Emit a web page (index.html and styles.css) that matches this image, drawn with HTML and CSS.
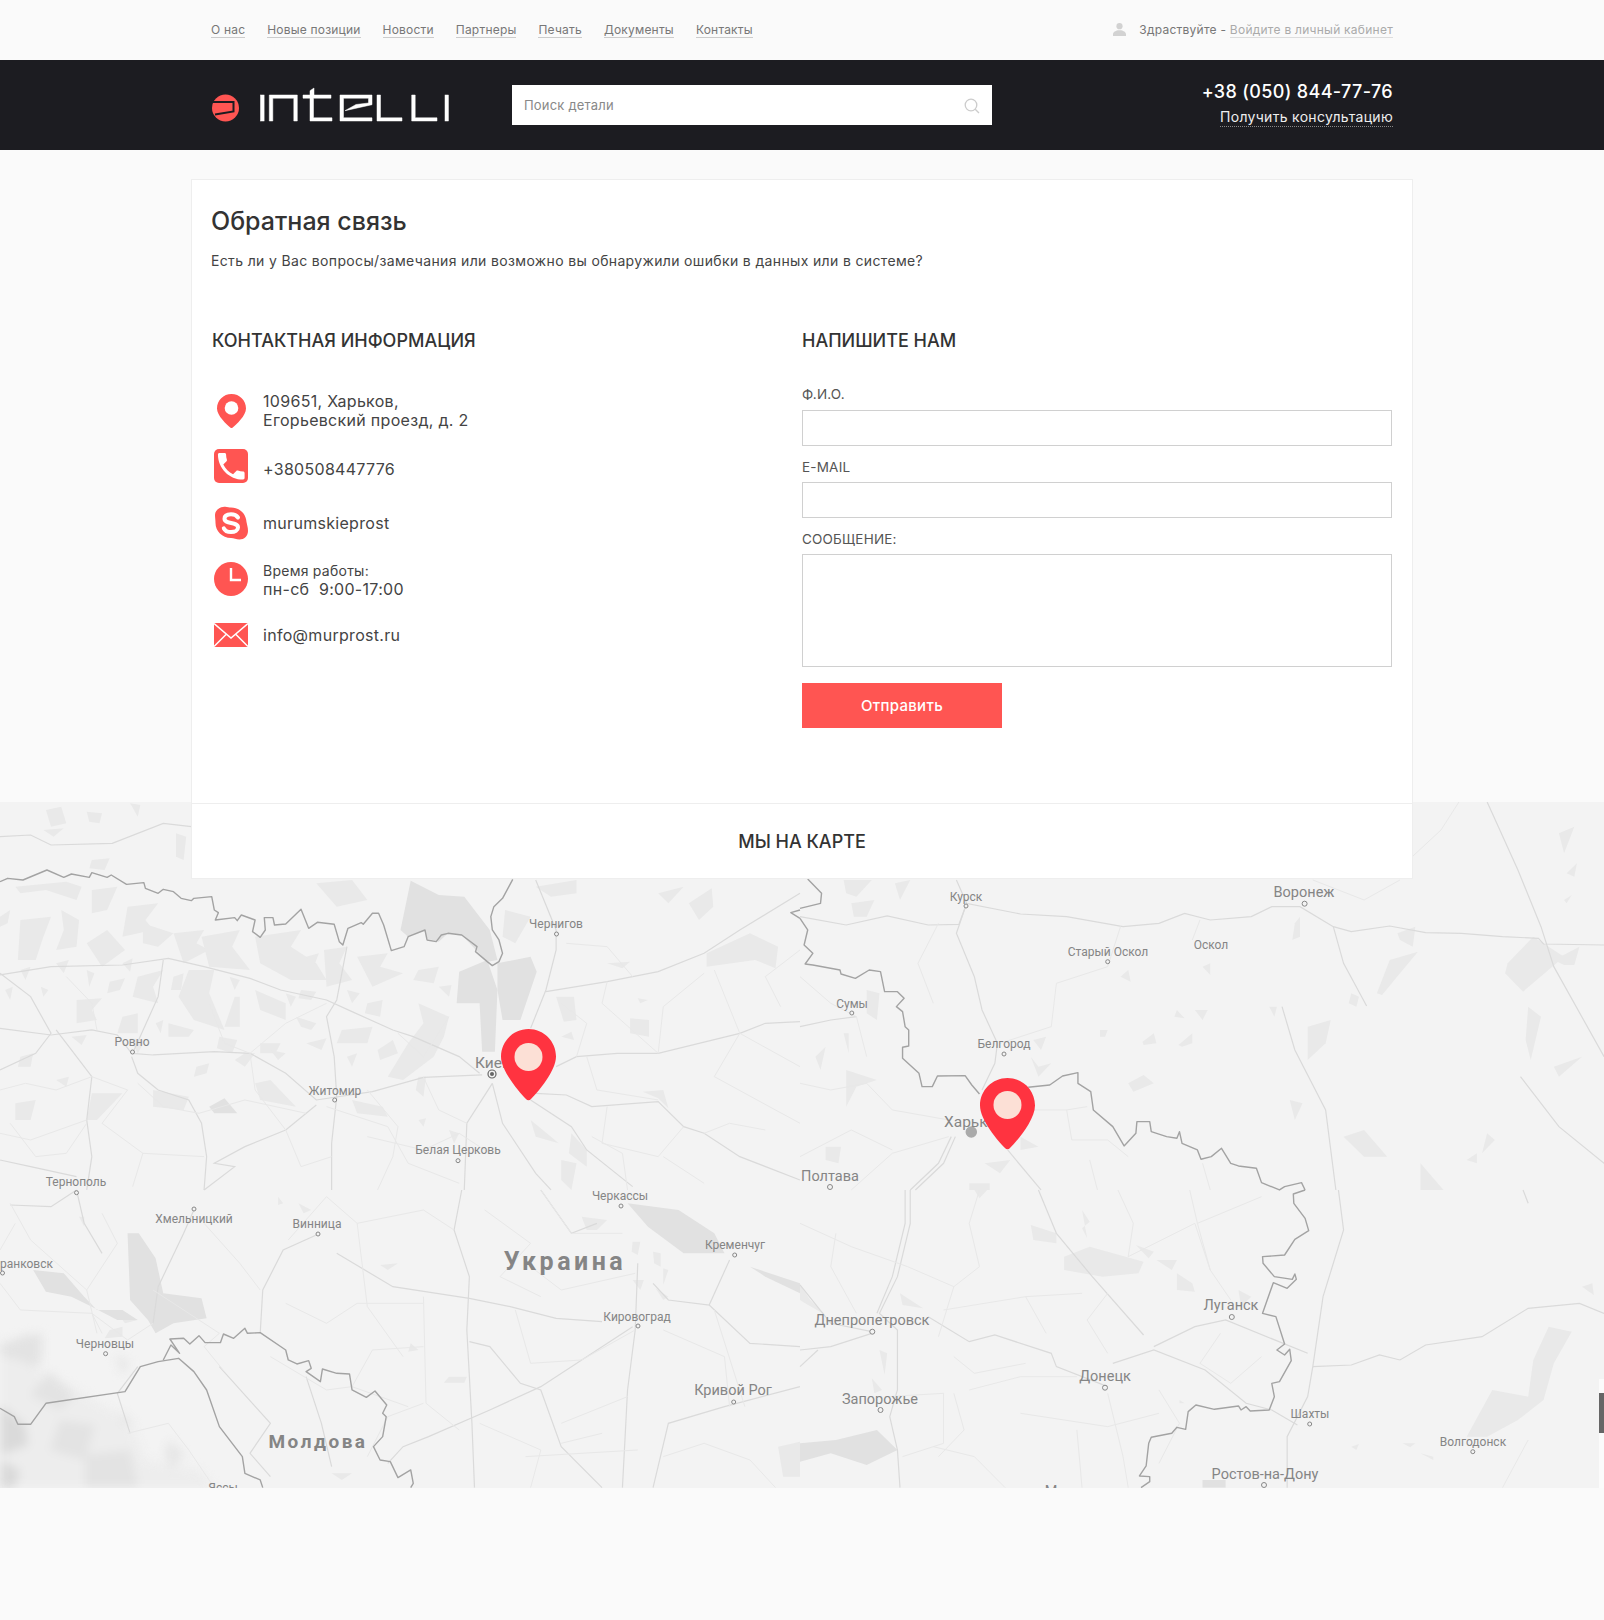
FILE: index.html
```html
<!DOCTYPE html>
<html lang="ru">
<head>
<meta charset="utf-8">
<title>Обратная связь</title>
<link rel="stylesheet" href="styles.css">
</head>
<body>
<header class="topbar">
  <div class="wrap topbar-inner">
    <nav class="topnav">
      <a href="#">О нас</a><a href="#">Новые позиции</a><a href="#">Новости</a><a href="#">Партнеры</a><a href="#">Печать</a><a href="#">Документы</a><a href="#">Контакты</a>
    </nav>
    <div class="greet">
      <svg class="user-ico" viewBox="0 0 13 13"><circle cx="6.5" cy="3.2" r="3.1"/><path d="M0 13V11.2C0 9 3 7.9 4.6 7.3H8.4C10 7.9 13 9 13 11.2V13Z"/></svg>
      <span class="greet-text">Здраствуйте - <a href="#">Войдите в личный кабинет</a></span>
    </div>
  </div>
</header>

<div class="mainbar">
  <div class="wrap mainbar-inner">
    <a class="logo" href="#" aria-label="intelli">
      <svg viewBox="0 0 240 40" width="240" height="40">
        <circle class="logo-dot" cx="14.5" cy="23" r="13.5"/>
        <path class="logo-cut" d="M0 17H22.5V26.500L4 29.500"/>
        <g class="logo-mark">
          <rect x="49.500" y="10" width="3.600" height="26"/>
          <path d="M58.300 36V10H86.300V36H82.800V13.200H61.800V36Z"/>
          <path d="M99 36V13.200H92V10H99V5.700L103 3V10H120V13.200H102.500V32.800H121V36Z"/>
          <path d="M129 36V10H161V19.700L134 25.700L145 19.500L157.500 18V13.200H132.500V32.800H161V36Z"/>
          <path d="M166 10H169.500V32.800H191V36H166Z"/>
          <path d="M200.700 10H204.200V32.800H226V36H200.700Z"/>
          <rect x="234" y="10" width="3.400" height="26"/>
        </g>
      </svg>
    </a>
    <form class="search">
      <input class="search-input" type="text" placeholder="Поиск детали">
      <svg class="search-ico" viewBox="0 0 16 16"><circle cx="7" cy="7" r="5.8"/><path d="M11.2 11.2L15 15"/></svg>
    </form>
    <div class="call">
      <div class="call-phone">+38 (050) 844-77-76</div>
      <a class="call-link" href="#">Получить консультацию</a>
    </div>
  </div>
</div>

<main class="card">
  <h1 class="title">Обратная связь</h1>
  <p class="lead">Есть ли у Вас вопросы/замечания или возможно вы обнаружили ошибки в данных или в системе?</p>
  <div class="columns">
    <section class="info">
      <h2 class="heading heading-left">КОНТАКТНАЯ ИНФОРМАЦИЯ</h2>
      <ul class="contacts">
        <li class="contact">
          <svg class="ico" viewBox="-0.500 0 34 34"><path class="red" d="M17 0C25 0 31.500 6.400 31.500 14.400C31.500 22 21 31 17 34.500C13 31 2.500 22 2.500 14.400C2.500 6.400 9 0 17 0Z"/><circle class="white" cx="17" cy="14" r="6.800"/></svg>
          <div class="contact-text">109651, Харьков,<br>Егорьевский проезд, д. 2</div>
        </li>
        <li class="contact">
          <svg class="ico ico-up" viewBox="0 0 34 34"><rect class="red" width="34" height="34" rx="5"/><path class="white" transform="translate(-0.500 -0.500) scale(1.480)" d="M6.620 10.790c1.440 2.830 3.760 5.140 6.590 6.590l2.200-2.200c.270-.270.670-.360 1.020-.240 1.120.370 2.330.570 3.570.570.550 0 1 .450 1 1V20c0 .550-.450 1-1 1-9.390 0-17-7.610-17-17 0-.550.450-1 1-1h3.500c.550 0 1 .450 1 1 0 1.250.200 2.450.570 3.570.110.350.030.740-.250 1.020l-2.200 2.200z"/></svg>
          <div class="contact-text contact-low">+380508447776</div>
        </li>
        <li class="contact">
          <svg class="ico" viewBox="0 0 34 34"><path class="red" d="M9 1C12 0 15 1.500 17 1.500C26 1.500 32 8 32.500 16C33 19 34 21 34 25C34 30 30 33.500 25.500 33.500C22 33.500 20 32 17 32C8 32 1.500 25 1.500 17C1.500 14 1 12 1 9C1 5 4.500 1.500 9 1Z"/><path class="skype-s" d="M24 11.500C22.500 9.300 20 8.300 17 8.300C13 8.300 10.500 10 10.500 12.800C10.500 18.500 24 15.500 24 21.500C24 24.300 21 26 17 26C13.500 26 11 24.800 9.800 22.300"/></svg>
          <div class="contact-text">murumskieprost</div>
        </li>
        <li class="contact">
          <svg class="ico" viewBox="0 0 34 34"><circle class="red" cx="17" cy="17" r="17"/><path class="clock-hand" d="M17 6V18H27"/></svg>
          <div class="contact-text contact-hours"><span class="hours-label">Время работы:</span><br>пн-сб&nbsp;&nbsp;9:00-17:00</div>
        </li>
        <li class="contact">
          <svg class="ico ico-mail" viewBox="0 0 34 24"><rect class="red" width="34" height="24"/><path class="mail-line" d="M0 .5L17 15L34 .5M0 23.500L12 11.500M34 23.500L22 11.500"/></svg>
          <div class="contact-text">info@murprost.ru</div>
        </li>
      </ul>
    </section>
    <section class="write">
      <h2 class="heading">НАПИШИТЕ НАМ</h2>
      <form class="form">
        <label class="field-label" for="f-name">Ф.И.О.</label>
        <input class="field" id="f-name" type="text">
        <label class="field-label" for="f-mail">E-MAIL</label>
        <input class="field" id="f-mail" type="text">
        <label class="field-label" for="f-msg">СООБЩЕНИЕ:</label>
        <textarea class="field field-area" id="f-msg"></textarea>
        <button class="submit" type="button">Отправить</button>
      </form>
    </section>
  </div>
</main>

<section class="map">
  <svg class="map-canvas" viewBox="0 802 1604 686" width="1604" height="686">
    <rect class="land" x="0" y="802" width="1604" height="686"/>

    <g class="shade-soft">
      <polygon class="sh-a" points="0,1340 40,1370 85,1395 130,1420 145,1460 200,1470 215,1488 0,1488"/>
      <polygon class="sh-b" points="0,1345 25,1335 42,1334 42,1358 36,1368 25,1362 0,1355"/>
      <polygon class="sh-b" points="50,1372 75,1395 60,1410 30,1395"/>
      <polygon class="sh-b" points="60,1420 95,1425 85,1460 50,1450"/>
      <polygon class="sh-c" points="0,1405 25,1425 28,1445 0,1455"/>
      <polygon class="sh-b" points="85,1455 130,1450 138,1488 85,1488"/>
      <polygon class="sh-c" points="0,1460 20,1470 15,1488 0,1488"/>
      <polygon class="sh-d" points="115,1355 130,1362 122,1375"/>
      <polygon class="sh-d" points="120,1410 135,1425 122,1425"/>
      <polygon class="sh-d" points="170,1440 185,1455 170,1470 165,1450"/>
    </g>

    <g transform="translate(0 790) scale(.5102 .3333)">
      <g class="forest">
        <polygon points="30,290 130,275 160,290 150,330 90,300 40,310"/>
        <polygon points="180,300 230,290 210,360 180,370"/>
        <polygon points="250,350 310,340 285,390 300,420 240,440"/>
        <polygon points="120,360 155,390 150,470 110,480 125,420"/>
        <polygon points="40,390 100,380 85,440 70,510 35,510"/>
        <polygon points="170,460 210,420 245,480 200,530"/>
        <polygon points="280,400 340,430 310,470 280,460"/>
        <polygon points="340,430 400,420 385,460 410,480 360,520"/>
        <polygon points="395,440 470,420 455,470 490,540 410,530"/>
        <polygon points="500,440 590,420 570,470 620,520 640,570 570,570 510,520"/>
        <polygon points="635,480 680,470 665,520 690,570 640,590"/>
        <polygon points="700,500 760,490 745,530 790,550 730,590"/>
        <polygon points="270,560 320,540 300,590 310,640 260,620"/>
        <polygon points="370,540 420,540 410,610 440,720 380,690 350,620"/>
        <polygon points="460,620 470,620 470,710 440,710"/>
        <polygon points="500,600 560,640 560,690 510,660"/>
        <polygon points="150,630 200,625 180,660 190,690 150,700"/>
        <polygon points="240,680 270,670 270,730 230,730"/>
        <polygon points="330,700 380,720 370,740 330,740"/>
        <polygon points="580,680 620,700 610,720 590,710"/>
        <polygon points="670,720 730,710 720,760 660,760"/>
        <polygon points="510,760 550,760 540,790 510,790"/>
        <polygon points="820,640 880,680 870,740 850,800 790,870 760,860 800,760 830,700"/>
        <polygon points="480,790 500,790 480,830 460,810"/>
        <polygon points="300,900 370,920 360,960 300,950"/>
        <polygon points="500,880 530,870 580,950 510,930"/>
        <polygon points="690,930 750,950 760,980 700,970"/>
        <polygon points="180,910 240,910 190,990 170,990"/>
        <polygon points="30,940 70,930 60,990 30,990"/>
        <polygon points="1090,620 1125,620 1130,690 1105,695"/>
        <polygon points="1235,685 1272,690 1272,740 1235,730"/>
        <polygon points="1350,340 1395,295 1398,350 1370,390"/>
        <polygon points="1290,310 1340,290 1310,340"/>
        <polygon points="1385,490 1470,430 1525,470 1520,535 1480,510 1385,530"/>
        <polygon points="1050,290 1130,270 1130,310 1080,320"/>
        <polygon points="620,280 690,270 720,330 660,350"/>
        <polygon points="990,360 1040,380 1010,460 985,440"/>
        <polygon points="820,860 835,860 830,920 815,900"/>
        <polygon points="1120,1030 1150,1080 1150,1130 1115,1090"/>
        <polygon points="1040,990 1080,1040 1095,1060 1050,1040"/>
        <polygon points="1260,905 1300,900 1310,955 1290,925"/>
        <polygon points="1100,1110 1130,1120 1120,1200 1100,1170"/>
        <polygon points="90,60 120,50 130,100 100,110"/><polygon points="170,65 200,70 195,100 175,95"/><polygon points="255,40 275,45 270,80"/><polygon points="345,130 365,140 360,210 345,200"/><polygon points="180,210 215,205 205,240 175,235"/><polygon points="85,120 125,115 105,140"/>
        <polygon points="0,380 20,360 15,400 0,410"/><polygon points="10,600 25,590 20,630"/><polygon points="80,590 95,600 85,620"/><polygon points="170,540 185,550 175,590"/><polygon points="215,575 245,565 235,600 210,610"/><polygon points="340,560 360,550 355,600 335,600"/><polygon points="450,560 470,570 460,600"/><polygon points="590,600 620,605 610,630 585,625"/><polygon points="680,600 705,610 690,640"/><polygon points="560,610 580,620 570,650"/><polygon points="430,740 465,750 455,790 425,775"/><polygon points="255,745 285,750 270,790"/><polygon points="140,740 170,735 160,765"/><polygon points="40,800 65,790 60,830 35,830"/><polygon points="110,870 135,860 130,890"/><polygon points="600,760 640,745 630,780"/><polygon points="740,780 770,750 780,790 745,810"/><polygon points="680,800 700,790 690,830"/><polygon points="530,780 560,790 545,810"/><polygon points="385,830 410,820 405,850 380,860"/><polygon points="305,700 320,690 315,730"/><polygon points="720,640 750,630 745,680 715,670"/><polygon points="600,500 625,490 615,530"/><polygon points="240,520 260,505 255,545"/><polygon points="110,520 135,510 125,550"/><polygon points="40,540 60,530 50,570"/><polygon points="820,540 860,530 850,580 810,570"/><polygon points="860,590 885,585 880,620"/><polygon points="1100,740 1120,725 1125,750"/><polygon points="1190,520 1235,515 1220,535"/><polygon points="1250,625 1270,630 1255,640"/><polygon points="880,1020 900,1030 890,1060"/><polygon points="820,990 835,985 830,1010"/>
      </g>
      <g class="forest-dark">
        <polygon points="785,420 805,272 860,315 910,320 960,420 975,510 955,515 905,435 878,430 860,455 835,445 833,420 800,440"/>
        <polygon points="975,520 1040,500 1052,545 1020,690 985,690 975,600"/>
        <polygon points="900,545 955,510 975,600 970,785 945,785 940,640 895,640"/>
        <polygon points="410,950 440,925 465,970 420,970"/>
      </g>
      <g class="road">
        <polyline points="0,555 100,530 240,525 330,505 400,530 490,565 550,600 640,630 690,665 770,720 810,740 900,800 940,850"/>
        <polyline points="0,715 100,735 180,720 230,735 258,790"/>
        <polyline points="258,790 300,795 420,785 490,790 560,850 620,930 730,905 830,862 945,855"/>
        <polyline points="1090,830 1130,800 1210,790 1290,790 1450,730 1500,700 1568,695"/>
        <polyline points="1040,715 1070,600 1090,480 1090,420 1050,270"/>
        <polyline points="1070,605 1190,575 1290,545 1380,490 1450,420 1568,310"/>
        <polyline points="1050,910 1110,915 1160,950 1290,935 1340,1010 1380,1030 1450,1100 1568,1170"/>
        <polyline points="965,880 985,1000 1050,1150 1080,1200"/>
        <polyline points="1040,930 1120,1010 1150,1080 1240,1190"/>
        <polyline points="680,470 660,630 640,680 655,800 660,920 650,1060 650,1200"/>
        <polyline points="320,510 310,620 260,790"/>
        <polyline points="258,800 270,850 310,900 370,930 395,1000 405,1100 400,1200"/>
        <polyline points="110,720 180,860 170,990 180,1100 170,1200"/>
        <polyline points="910,1200 915,1000 965,880"/>
        <polyline points="0,1110 60,1130 150,1160"/>
        <polyline points="0,550 60,620 100,730 70,790 0,840"/>
        <polyline points="560,1020 480,1070 420,1120 460,1130 400,1200"/>
        <polyline points="560,1020 620,945"/>
        <polyline points="0,140 60,135 100,165 220,160 320,100 375,110"/>
      </g>
      <g class="road-minor">
        <polyline points="0,1030 60,1050 170,990"/>
        <polyline points="270,880 320,950 390,970 480,930 600,970"/>
        <polyline points="780,730 830,800 880,680"/>
        <polyline points="1150,800 1170,900 1290,930"/>
        <polyline points="1190,575 1180,640 1290,790"/>
        <polyline points="1400,540 1450,730 1400,860 1568,1000"/>
        <polyline points="1110,460 1190,470 1240,560"/>
        <polyline points="720,1040 830,1080 900,1030 960,1090"/>
        <polyline points="490,790 560,700 640,640"/>
        <polyline points="640,950 760,1010 800,1120 900,1180"/>
        <polyline points="1160,1040 1220,1090 1230,1200"/>
        <polyline points="1300,1100 1380,1180"/>
        <polyline points="0,900 50,880 110,900 180,860"/>
        <polyline points="180,860 250,900 200,1000 280,1090 400,1100"/>
        <polyline points="20,1000 70,1100 130,1090 170,1000"/>
        <polyline points="280,1090 260,1190"/>
        <polyline points="490,790 500,900 560,1020 590,1130 650,1100"/>
        <polyline points="720,900 780,1010 770,1100 740,1200"/>
        <polyline points="830,862 860,960 915,1000"/>
        <polyline points="1130,800 1150,700 1100,640"/>
        <polyline points="1290,790 1300,650 1380,550"/>
        <polyline points="1450,730 1568,830"/>
        <polyline points="1190,950 1180,1060 1290,1100 1340,1010"/>
        <polyline points="1568,480 1500,560 1530,650"/>
        <polyline points="130,560 180,640 190,720"/>
        <polyline points="410,640 440,760 490,790"/>
        <polyline points="1380,1030 1430,1000 1500,1020"/>
      </g>
      <g class="border">
        <polyline points="0,275 15,265 45,270 92,240 125,262 140,252 175,262 180,248 210,262 218,255 248,283 282,278 285,295 310,310 320,298 340,305 355,325 375,332 380,325 415,320 420,360 428,368 422,390 460,383 465,392 473,375 500,390 495,425 510,442 520,420 518,383 535,383 538,405 560,402 590,358 605,415 622,397 655,403 665,455 672,465 682,415 708,398 712,403 730,370 742,370 752,405 767,482 792,470 800,440 833,420 837,450 855,455 865,435 878,430 905,435 935,470 932,485 955,515 965,527 978,515 985,490 978,450 965,420 962,380 968,350 985,325 1005,268"/>
        <polyline points="1568,360 1550,368 1568,385"/>
      </g>
    </g>

    <g transform="translate(800 790) scale(.5128 .3333)">
      <g class="forest">
        <polygon points="85,270 140,270 110,320 90,310"/>
        <polygon points="100,340 145,330 130,380 105,380"/>
        <polygon points="185,280 215,270 195,330"/>
        <polygon points="1480,130 1510,110 1490,190"/>
        <polygon points="1495,250 1515,220 1510,260"/>
        <polygon points="1490,330 1505,315 1495,340"/>
        <polygon points="965,400 975,380 975,440 960,450"/>
        <polygon points="1165,430 1200,410 1195,470 1170,450"/>
        <polygon points="1125,610 1150,510 1205,485 1170,550 1135,615"/>
        <polygon points="1380,520 1430,440 1490,500 1410,605 1375,550"/>
        <polygon points="1470,510 1520,470 1510,525 1490,525"/>
        <polygon points="1075,610 1090,620 1085,650 1070,640"/>
        <polygon points="990,710 1035,690 1025,760 990,810"/>
        <polygon points="915,650 930,650 925,680"/>
        <polygon points="1420,650 1445,680 1425,810 1415,750"/>
        <polygon points="1060,1040 1100,1020 1145,1100 1100,1100"/>
        <polygon points="1340,1030 1355,1050 1330,1090"/>
        <polygon points="1470,830 1525,800 1480,860"/>
        <polygon points="955,930 980,940 965,990"/>
        <polygon points="770,660 795,660 785,690"/>
        <polygon points="735,660 750,685 730,680"/>
        <polygon points="585,720 600,720 595,740 585,740"/>
        <polygon points="668,755 690,730 695,760 670,765"/>
        <polygon points="738,765 765,730 765,760 745,770"/>
        <polygon points="625,560 640,540 645,575"/>
        <polygon points="785,530 800,520 800,555"/>
        <polygon points="640,880 670,855 690,880 650,905"/>
        <polygon points="455,750 480,740 470,780"/>
        <polygon points="450,800 465,830 490,820 465,860"/>
        <polygon points="30,800 50,770 40,840"/>
        <polygon points="85,730 95,730 95,790"/>
        <polygon points="90,840 150,870 110,890 90,950"/>
        <polygon points="130,600 155,610 150,690 130,670"/>
        <polygon points="50,1070 80,1070 75,1120 50,1110"/>
        <polygon points="360,1120 410,1110 390,1150"/>
        <polygon points="330,1180 370,1180 370,1200 330,1200"/>
        <polygon points="1210,1120 1255,1200 1210,1200"/>
        <polygon points="430,1040 465,1070 430,1080"/>
        <polygon points="1300,1110 1320,1090 1320,1120"/>
      </g>
      <g class="road">
        <polyline points="0,380 90,405 170,378 250,405 310,403 325,340 430,372 520,380 630,410 700,400 750,370 800,390 880,380 920,350 975,350 1040,410 1075,425 1150,408 1220,428 1290,430 1370,440 1440,445 1450,462 1568,465"/>
        <polyline points="305,270 325,340 305,430 340,560 355,660 385,760 380,820 355,900"/>
        <polyline points="1340,36 1400,240 1445,410 1470,530 1568,800"/>
        <polyline points="1040,410 1060,520 1105,648"/>
        <polyline points="940,650 965,780 1025,960 1045,1200"/>
        <polyline points="1405,860 1480,1010 1568,1120"/>
        <polyline points="295,1040 270,1120 215,1200"/>
        <polyline points="303,1040 280,1120 225,1200"/>
        <polyline points="405,1080 470,1200"/>
        <polyline points="0,710 60,690 110,680"/>
      </g>
      <g class="road-minor">
        <polyline points="1285,36 1250,120 1180,220"/>
        <polyline points="625,410 600,530 500,580 490,710 390,760"/>
        <polyline points="780,390 765,450"/>
        <polyline points="0,560 60,640 110,680 130,800"/>
        <polyline points="0,880 60,900 130,880 180,960 290,990"/>
        <polyline points="440,960 520,960 560,950"/>
        <polyline points="520,960 530,1050 600,1050 640,1100"/>
        <polyline points="100,1200 180,1090 290,1040"/>
        <polyline points="0,1100 100,1020 180,1080"/>
        <polyline points="565,1110 580,1200"/>
        <polyline points="785,1120 800,1200"/>
        <polyline points="270,400 230,520 260,640"/>
        <polyline points="1000,270 1100,330 1170,270"/>
      </g>
      <g class="border">
        <polyline points="0,355 40,340 42,310 15,267"/>
        <polyline points="0,385 15,420 8,465 25,490 10,522 25,525 78,540 80,552 108,565 135,540 157,545 165,605 190,605 203,625 188,650 200,665 205,710 212,720 212,768 200,772 200,805 232,850 238,890 258,890 268,858 322,857 335,885 350,912"/>
        <polyline points="445,892 487,885 512,858 542,848 542,880 567,905 572,960 610,1010 632,1068 655,1030 657,995 682,995 685,1025 715,1040 735,1045 740,1025 745,1060 775,1080 782,1108 802,1100 822,1075 840,1120 855,1128 890,1135 900,1178 935,1200 945,1190 978,1178 985,1200"/>
      </g>
    </g>

    <g transform="translate(0 1190) scale(.5102 .3333)">
      <g class="forest">
        <polygon points="1140,80 1190,90 1170,120 1150,120"/>
        <polygon points="1240,155 1255,155 1250,195 1238,185"/>
        <polygon points="1280,185 1295,190 1295,230 1282,220"/>
        <polygon points="1300,235 1310,240 1300,285"/>
        <polygon points="1240,270 1262,270 1255,300"/>
        <polygon points="1285,295 1310,320 1300,330"/>
        <polygon points="1525,770 1568,755 1568,860 1535,860"/>
        <polygon points="745,225 780,220 760,240"/>
        <polygon points="880,560 915,560 910,578 870,578"/>
        <polygon points="585,40 610,60 595,70"/>
        <polygon points="155,80 165,80 165,110"/>
        <polygon points="545,20 555,40 545,45"/>
        <polygon points="215,420 240,410 240,440 205,445"/>
        <polygon points="225,360 270,390 245,400"/>
        <polygon points="650,850 690,850 670,870"/>
        <polygon points="805,460 820,480 800,485"/>
      </g>
      <g class="forest-dark">
        <polygon points="250,130 272,130 305,205 320,310 395,325 405,385 340,400 305,430 290,390 255,330"/>
        <polygon points="65,240 125,250 165,320 190,360 240,360 270,390 230,390 180,350 140,320 90,305"/>
        <polygon points="1230,40 1330,60 1400,130 1420,190 1340,190 1270,110"/>
        <polygon points="1470,230 1568,280 1568,310 1500,260"/>
      </g>
      <g class="road">
        <polyline points="150,0 100,50 20,45"/>
        <polyline points="150,0 165,100 200,190"/>
        <polyline points="380,60 360,130 310,290 300,400"/>
        <polyline points="620,135 555,180 515,300 510,430"/>
        <polyline points="660,190 770,290 920,325 1000,350 1090,385 1180,395"/>
        <polyline points="905,0 890,120 920,260 915,420 925,700 930,893"/>
        <polyline points="1250,220 1245,420 1230,600 1220,893"/>
        <polyline points="1430,210 1390,345 1310,330 1280,280"/>
        <polyline points="1390,345 1470,460 1568,470"/>
        <polyline points="1240,410 1060,590 960,660 840,740 790,770 760,820"/>
        <polyline points="920,455 960,470 1020,580 1060,600 1100,770 1180,893"/>
        <polyline points="1568,590 1420,650 1310,700 1280,893"/>
        <polyline points="255,730 230,610 270,530"/>
        <polyline points="430,530 530,700 490,790 530,860"/>
        <polyline points="600,560 630,700 650,830"/>
        <polyline points="1060,0 1120,130 1170,100"/>
      </g>
      <g class="road-minor">
        <polyline points="0,280 40,360 180,370 200,430"/>
        <polyline points="20,40 60,150 170,300 190,430"/>
        <polyline points="250,730 330,700 370,780 420,893"/>
        <polyline points="700,100 720,350 790,500"/>
        <polyline points="1060,0 1120,130 1220,130"/>
        <polyline points="530,500 640,600 690,590 800,650"/>
        <polyline points="1030,800 1250,780"/>
        <polyline points="1100,760 1180,730"/>
        <polyline points="1400,360 1460,650"/>
        <polyline points="830,320 835,640 900,720"/>
        <polyline points="565,150 640,20 700,100 830,60 890,120"/>
        <polyline points="560,340 640,400 700,340 830,340"/>
        <polyline points="690,590 730,480 830,470"/>
        <polyline points="830,640 760,680 720,800"/>
        <polyline points="950,60 1040,160 980,260 1060,320"/>
        <polyline points="1010,360 1040,520 1140,510 1245,420"/>
        <polyline points="1300,420 1420,500 1430,650"/>
        <polyline points="1100,700 1230,620"/>
        <polyline points="940,700 1060,780 1040,893"/>
        <polyline points="1300,800 1380,760 1470,810 1520,893"/>
        <polyline points="180,370 250,450 300,400"/>
        <polyline points="400,100 470,220 510,300"/>
        <polyline points="300,300 430,430 400,470 440,545"/>
        <polyline points="200,70 230,160 170,300"/>
        <polyline points="30,100 0,180"/>
        <polyline points="1040,230 1100,300 1245,250"/>
      </g>
      <g class="border">
        <polyline points="0,655 28,680 35,703 60,703 90,640 245,605 275,530 310,515 350,505 380,545 405,600 430,710 475,800 480,850 510,870 515,893"/>
        <polyline points="320,510 335,465 352,490 333,447 360,445 372,462 390,437 402,458 432,458 438,432 458,445 480,415 485,430 510,428 560,480 565,510 582,522 605,512 610,535 600,545 628,575 632,537 660,550 685,552 690,600 718,622 735,603 758,645 750,670 757,680 750,740 732,770 745,810 765,815 780,863 805,840 810,880 805,893"/>
      </g>
    </g>

    <g transform="translate(800 1190) scale(.5128 .3333)">
      <g class="forest">
        <polygon points="450,105 500,130 500,160 455,150"/>
        <polygon points="515,200 565,170 670,215 660,250 590,260 515,240"/>
        <polygon points="655,165 690,185 680,205"/>
        <polygon points="695,210 735,210 725,240"/>
        <polygon points="735,250 765,280 770,305 735,300"/>
        <polygon points="0,285 20,330 50,375 10,340 0,330"/>
        <polygon points="195,310 240,355 200,345"/>
        <polygon points="140,565 160,600 145,610"/>
        <polygon points="155,480 170,490 165,555"/>
        <polygon points="1525,290 1545,280 1548,315"/>
        <polygon points="1075,770 1090,762 1085,780"/>
        <polygon points="1175,760 1200,760 1190,772"/>
        <polygon points="1210,790 1235,800 1235,810"/>
        <polygon points="740,630 750,640 740,640"/>
        <polygon points="855,300 880,320 860,350"/>
        <polygon points="340,0 365,0 350,25"/>
        <polygon points="550,60 565,95 550,115 560,145"/>
        <polygon points="1460,410 1505,425 1470,520 1450,630 1400,690 1340,740 1300,740 1350,600 1420,620 1430,510"/>
      </g>
      <g class="forest-dark">
        <polygon points="0,760 70,750 150,720 190,780 130,825 60,790 0,815"/>
        <polygon points="785,870 830,870 830,893 785,893"/>
      </g>
      <g class="road">
        <polyline points="215,0 215,100 190,260 155,370 190,420 190,600 175,680 190,780 195,893"/>
        <polyline points="205,0 205,100 180,260 150,370"/>
        <polyline points="250,380 330,455 380,435 490,490 500,530 600,590"/>
        <polyline points="465,0 500,130 570,260 670,435"/>
        <polyline points="690,470 770,410 830,390 990,490"/>
        <polyline points="1000,530 1075,525 1130,495 1170,510 1220,465 1330,440 1420,355 1520,340 1568,370"/>
        <polyline points="1050,0 1060,120 1020,320 1000,530 990,620 950,740 950,893"/>
        <polyline points="610,520 690,480 790,540 870,640 920,660 970,705"/>
        <polyline points="0,480 60,470 140,430"/>
        <polyline points="0,530 35,480"/>
        <polyline points="0,285 60,400 140,425"/>
        <polyline points="1410,0 1420,40"/>
      </g>
      <g class="road-minor">
        <polyline points="620,0 650,100 640,200 770,100 800,240 840,330"/>
        <polyline points="0,100 100,170 210,230 300,290 270,440"/>
        <polyline points="280,360 440,320 550,310"/>
        <polyline points="440,320 480,430"/>
        <polyline points="300,500 340,550 440,520"/>
        <polyline points="330,600 430,560 540,560"/>
        <polyline points="170,620 280,610 280,760 200,800"/>
        <polyline points="430,670 600,710 700,670"/>
        <polyline points="540,720 550,893"/>
        <polyline points="600,610 630,800 640,893"/>
        <polyline points="260,770 340,800 400,893"/>
        <polyline points="775,100 800,240"/>
        <polyline points="820,430 780,520 840,580 900,500"/>
        <polyline points="1370,893 1420,750"/>
        <polyline points="350,0 330,100 350,230 300,290"/>
        <polyline points="760,0 775,100 900,20"/>
        <polyline points="600,310 560,390 600,490"/>
        <polyline points="70,130 60,230 110,370"/>
        <polyline points="300,610 320,720 270,800"/>
        <polyline points="700,600 740,700 700,820"/>
      </g>
      <g class="border">
        <polyline points="985,0 962,12 963,40 985,85 992,122 965,148 945,195 902,200 903,220 925,260 960,268 965,252 968,268 950,295 923,278 902,370 928,380 945,462 930,480 945,495 955,478 958,512 935,575 920,580 925,620 915,660 878,663 870,650 860,660 855,648 808,658 772,645 757,665 752,718 735,712 725,730 685,742 680,760 675,828 662,858 682,860 682,875 665,893"/>
      </g>
    </g>

    <g class="dots">
      <circle cx="556.500" cy="934" r="2"/><circle cx="132.500" cy="1052" r="2"/><circle cx="334.700" cy="1100" r="2"/><circle cx="458" cy="1160.700" r="2"/><circle cx="76.500" cy="1192.700" r="2"/><circle cx="194" cy="1209" r="2"/><circle cx="318" cy="1234" r="2"/><circle cx="621" cy="1206" r="2"/><circle cx="2.500" cy="1273" r="2"/><circle cx="734.700" cy="1255" r="2"/><circle cx="638" cy="1326" r="2"/><circle cx="105.600" cy="1353.700" r="2"/><circle cx="733.700" cy="1402" r="2"/><circle cx="966" cy="906" r="2"/><circle cx="1304.600" cy="903.700" r="2.500"/><circle cx="1107.700" cy="961.700" r="2"/><circle cx="851.800" cy="1013" r="2"/><circle cx="1004" cy="1054" r="2"/><circle cx="830" cy="1187" r="2.500"/><circle cx="872.300" cy="1331.700" r="2.500"/><circle cx="880.500" cy="1410" r="2.500"/><circle cx="1105" cy="1387.700" r="2.500"/><circle cx="1231.800" cy="1317" r="2.500"/><circle cx="1309.700" cy="1424" r="2"/><circle cx="1472.800" cy="1451.700" r="2"/><circle cx="1264" cy="1485" r="2.500"/>
    </g>
    <circle class="capital-outer" cx="492" cy="1074" r="4"/>
    <circle class="capital-inner" cx="492" cy="1074" r="2"/>
    <circle class="metro" cx="971.300" cy="1132" r="6.500"/>

    <g class="labels">
      <text class="lbl-s" x="556" y="924">Чернигов</text>
      <text class="lbl-s" x="132" y="1042">Ровно</text>
      <text class="lbl-s" x="335" y="1091">Житомир</text>
      <text class="lbl-s" x="458" y="1150">Белая Церковь</text>
      <text class="lbl-s" x="76" y="1182">Тернополь</text>
      <text class="lbl-s" x="194" y="1219">Хмельницкий</text>
      <text class="lbl-s" x="317" y="1224">Винница</text>
      <text class="lbl-s" x="620" y="1196">Черкассы</text>
      <text class="lbl-s lbl-end" x="53" y="1264">Ивано-Франковск</text>
      <text class="lbl-s" x="735" y="1245">Кременчуг</text>
      <text class="lbl-s" x="637" y="1317">Кировоград</text>
      <text class="lbl-s" x="105" y="1344">Черновцы</text>
      <text class="lbl-s" x="223" y="1488">Яссы</text>
      <text class="lbl-s" x="966" y="897">Курск</text>
      <text class="lbl-s" x="1108" y="952">Старый Оскол</text>
      <text class="lbl-s" x="1211" y="945">Оскол</text>
      <text class="lbl-s" x="852" y="1004">Сумы</text>
      <text class="lbl-s" x="1004" y="1044">Белгород</text>
      <text class="lbl-s" x="1310" y="1414">Шахты</text>
      <text class="lbl-s" x="1473" y="1442">Волгодонск</text>
      <text class="lbl-m" x="1304" y="892">Воронеж</text>
      <text class="lbl-m" x="830" y="1176">Полтава</text>
      <text class="lbl-m" x="872" y="1320">Днепропетровск</text>
      <text class="lbl-m" x="880" y="1399">Запорожье</text>
      <text class="lbl-m" x="1105" y="1376">Донецк</text>
      <text class="lbl-m" x="1231" y="1305">Луганск</text>
      <text class="lbl-m" x="1265" y="1474">Ростов-на-Дону</text>
      <text class="lbl-m" x="733" y="1390">Кривой Рог</text>
      <text class="lbl-m" x="1083" y="1491">Мариуполь</text>
      <text class="lbl-l lbl-start" x="475" y="1063">Киев</text>
      <text class="lbl-l lbl-start" x="944" y="1122">Харьков</text>
      <text class="lbl-country" x="565" y="1261">Украина</text>
      <text class="lbl-region" x="318" y="1441">Молдова</text>
    </g>

    <g class="pin">
      <path transform="translate(501 1029)" d="M27.500 0C42.700 0 55 12.300 55 27.500C55 42 37 63 30 70A3.200 3.200 0 0 1 25 70C18 63 0 42 0 27.500C0 12.300 12.300 0 27.500 0Z"/>
      <circle class="pin-hole" cx="528.500" cy="1057" r="14"/>
    </g>
    <g class="pin">
      <path transform="translate(980 1078)" d="M27.500 0C42.700 0 55 12.300 55 27.500C55 42 37 63 30 70A3.200 3.200 0 0 1 25 70C18 63 0 42 0 27.500C0 12.300 12.300 0 27.500 0Z"/>
      <circle class="pin-hole" cx="1007.500" cy="1105" r="14"/>
    </g>
  </svg>
  <h2 class="map-title">МЫ НА КАРТЕ</h2>
  <div class="scroll-track"><div class="scroll-thumb"></div></div>
</section>

<footer class="foot"></footer>
</body>
</html>
```
FILE: styles.css
```css
* { box-sizing: border-box; }
html, body { margin: 0; padding: 0; }
body { background: #fafafa; font-family: Inter, "Noto Sans", sans-serif; color: #333; }
a { text-decoration: none; color: inherit; }
.wrap { width: 1222px; margin: 0 auto; padding: 0 20px; }

.topbar { height: 60px; }
.topbar-inner { height: 60px; display: flex; align-items: center; justify-content: space-between; }
.topnav { display: flex; gap: 22px; font-size: 12px; letter-spacing: .2px; color: #777; }
.topnav a { border-bottom: 1px solid #ccc; line-height: 15px; }
.greet { display: flex; align-items: center; gap: 13px; font-size: 12px; letter-spacing: .25px; color: #777; margin-top: -2px; }
.user-ico { width: 13px; height: 13px; fill: #d2d2d2; display: block; }
.greet-text a { color: #aaa; border-bottom: 1px solid #ddd; }

.mainbar { height: 90px; background: #1c1c21; }
.mainbar-inner { height: 90px; display: flex; align-items: center; }
.logo { width: 301px; height: 40px; display: block; flex: none; }
.logo svg { display: block; overflow: visible; }
.logo-dot { fill: #ff5552; }
.logo-cut { fill: none; stroke: #1c1c21; stroke-width: 2; }
.logo-mark { fill: #fff; stroke: #fff; stroke-width: .5; }
.search { position: relative; width: 480px; height: 40px; flex: none; }
.search-input { width: 100%; height: 40px; border: 0; background: #fff; padding: 0 40px 0 12px; font: 13px Inter, sans-serif; letter-spacing: .2px; outline: 0; }
.search-input::placeholder { color: #888; opacity: 1; }
.search-ico { position: absolute; right: 12px; top: 13px; width: 16px; height: 16px; fill: none; stroke: #ccc; stroke-width: 1.3; }
.call { margin-left: auto; text-align: right; margin-top: -2px; }
.call-phone { color: #fff; font-size: 18px; font-weight: 500; letter-spacing: .35px; line-height: 22px; }
.call-link { display: inline-block; color: #eee; font-size: 14px; letter-spacing: .3px; line-height: 18px; margin-top: 5px; border-bottom: 1px dotted #888; }

.card { position: relative; z-index: 1; width: 1222px; margin: 29px auto 0; background: #fff; border: 1px solid #eee; padding: 26px 20px 75px 19px; }
.title { margin: 0; font-size: 25px; line-height: 30px; font-weight: 500; color: #333; }
.lead { margin: 15px 0 0; font-size: 14px; letter-spacing: .35px; line-height: 20px; color: #444; }
.columns { display: grid; grid-template-columns: 591px 590px; margin-top: 59px; }
.heading { margin: 0; font-size: 18px; line-height: 22px; font-weight: 500; color: #333; }
.heading-left { padding-left: 1px; }

.contacts { list-style: none; margin: 31px 0 0; padding: 0 0 0 3px; display: grid; grid-auto-rows: 56px; }
.contact { display: flex; align-items: center; gap: 15px; }
.ico { width: 34px; height: 34px; flex: none; display: block; }
.ico-up { margin-top: -2px; }
.ico-mail { height: 24px; }
.red { fill: #ff5552; }
.white { fill: #fff; }
.skype-s { fill: none; stroke: #fff; stroke-width: 4; stroke-linecap: round; }
.clock-hand { fill: none; stroke: #fff; stroke-width: 2.4; }
.mail-line { fill: none; stroke: #fff; stroke-width: 1.5; }
.contact-text { font-size: 16px; letter-spacing: .3px; line-height: 19px; color: #444; }
.contact-low { margin-top: 4px; }
.contact-hours { line-height: 18px; }
.hours-label { font-size: 14px; letter-spacing: .25px; }

.form { margin-top: 34px; display: block; }
.field-label { display: block; font-size: 13.500px; letter-spacing: .2px; line-height: 16px; color: #555; margin-bottom: 8px; }
.field { display: block; width: 590px; height: 36px; border: 1px solid #d0d0d0; background: #fff; margin-bottom: 13px; padding: 0 10px; outline: 0; border-radius: 0; font: 14px Inter, sans-serif; resize: none; }
.field-area { height: 113px; margin-bottom: 16px; }
.field-label + .field { margin-top: -1px; }
.field-label:first-child + .field { margin-top: 0; }
.submit { display: block; width: 200px; height: 45px; border: 0; background: #ff5552; color: #fff; font: 500 15px Inter, sans-serif; letter-spacing: .3px; cursor: pointer; }

.map { position: relative; height: 686px; margin-top: -2px; overflow: hidden; }
.map-canvas { display: block; }
.land { fill: #f3f3f3; }
.forest polygon { fill: #e9e9e9; }
.forest-dark polygon { fill: #e1e1e1; }
.shade-soft { filter: blur(5px); }
.sh-a { fill: #ededed; }
.sh-b { fill: #e3e3e3; }
.sh-c { fill: #dadada; }
.sh-d { fill: #e6e6e6; }
.road polyline { fill: none; stroke: #dadada; stroke-width: 1.2; vector-effect: non-scaling-stroke; }
.road-minor polyline { fill: none; stroke: #e8e8e8; stroke-width: 1; vector-effect: non-scaling-stroke; }
.border polyline { fill: none; stroke: #a3a3a3; stroke-width: 1.4; vector-effect: non-scaling-stroke; stroke-linejoin: round; }
.dots circle { fill: #f3f3f3; stroke: #888; stroke-width: 1; }
.capital-outer { fill: #f3f3f3; stroke: #666; stroke-width: 1.2; }
.capital-inner { fill: #666; }
.metro { fill: #aaa; stroke: #f3f3f3; stroke-width: 1.5; }
.labels text { font-family: Roboto, sans-serif; fill: #858585; text-anchor: middle; dominant-baseline: central; }
.lbl-s { font-size: 12px; }
.lbl-m { font-size: 14.500px; }
.lbl-l { font-size: 15.500px; }
.labels .lbl-end { text-anchor: end; }
.labels .lbl-start { text-anchor: start; }
.lbl-country { font-size: 25px; font-weight: 700; letter-spacing: 3.500px; }
.lbl-region { font-size: 19px; font-weight: 700; letter-spacing: 2.500px; }
.pin { fill: #ff3340; }
.pin-hole { fill: #fce0d6; }
.map-title { position: absolute; left: 191px; top: 2px; width: 1222px; height: 75px; margin: 0; background: #fff; border: 1px solid #eee; border-top: 0; text-align: center; font-size: 18px; line-height: 75px; font-weight: 500; color: #333; }
.scroll-track { position: absolute; right: 0; top: 577px; width: 5px; height: 109px; background: #fbfbfb; }
.scroll-thumb { width: 5px; height: 40px; margin-top: 14px; background: #666; }

.foot { height: 132px; }
```
